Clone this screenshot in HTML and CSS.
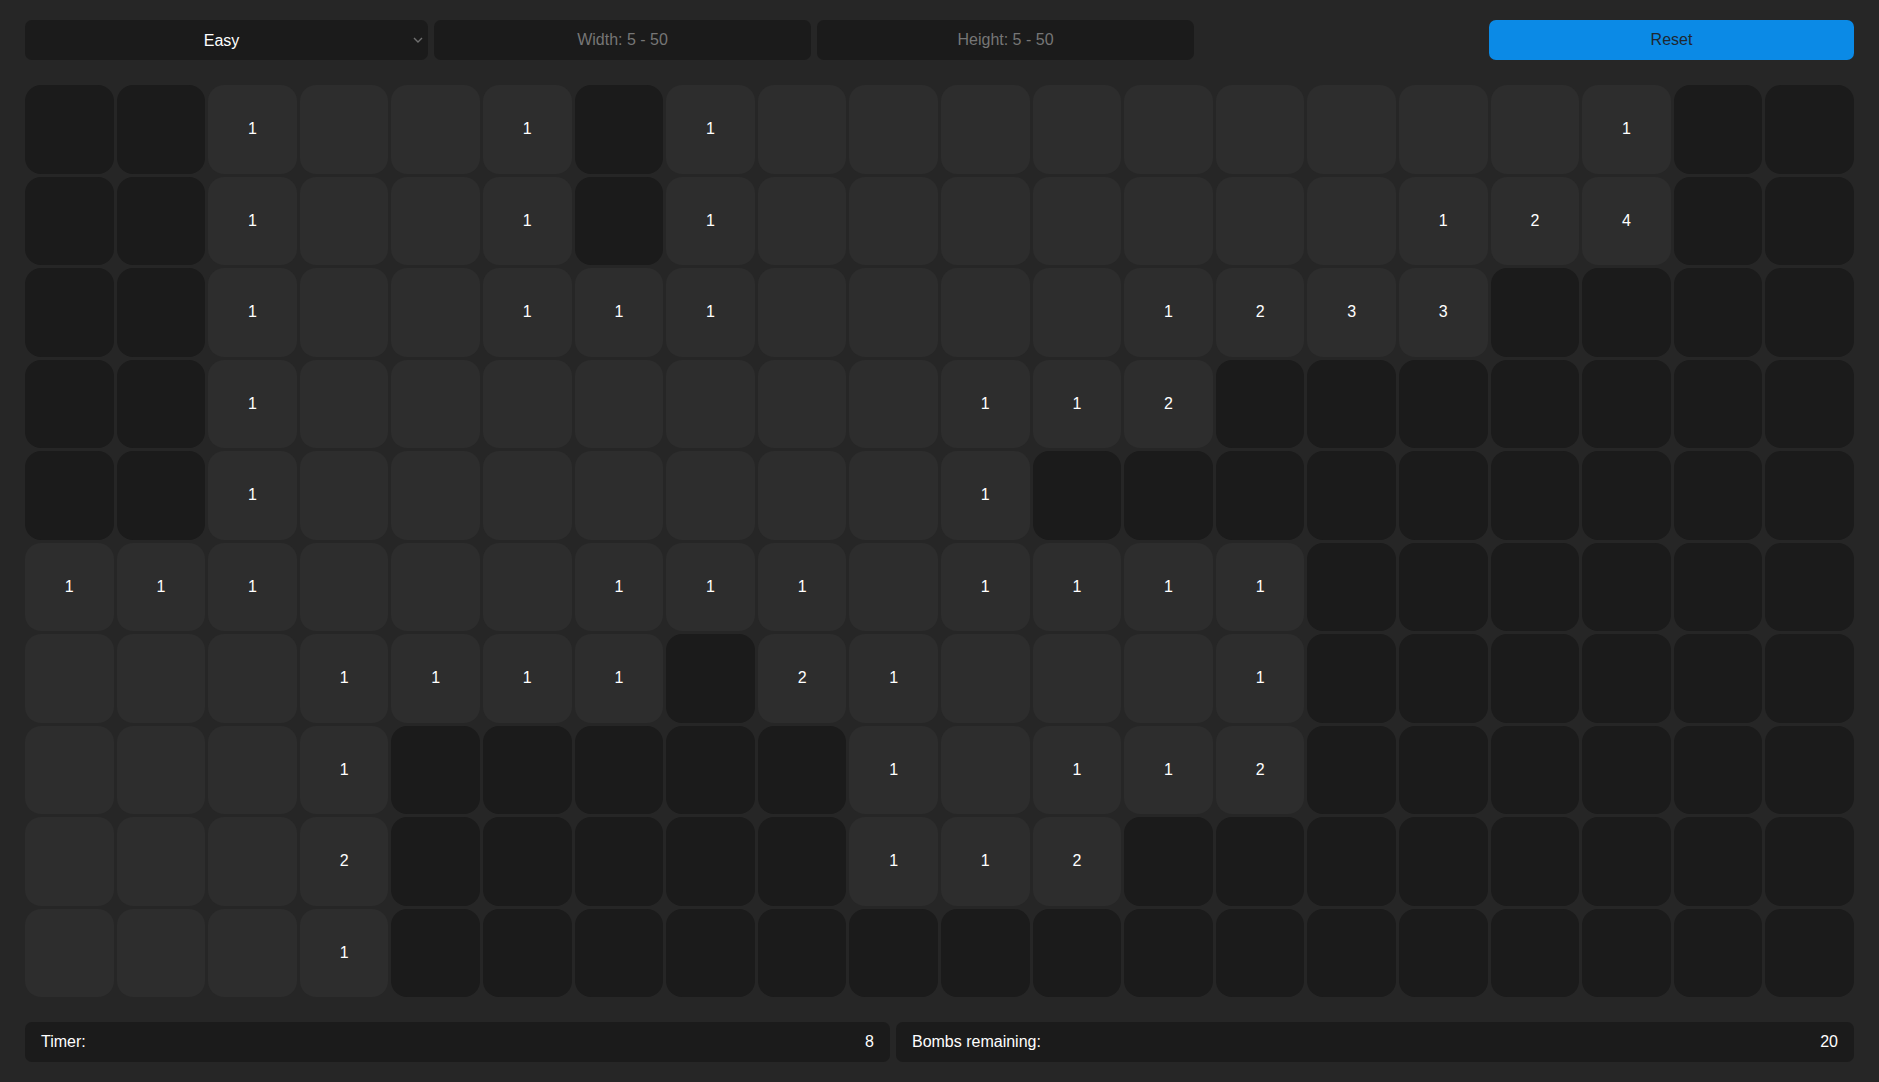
FILE: index.html
```html
<!DOCTYPE html>
<html lang="en">
<head>
<meta charset="utf-8">
<title>Minesweeper</title>
<link rel="stylesheet" href="styles.css">
</head>
<body>
<div class="app">
  <div class="toolbar">
    <div class="select-wrap">
      <select class="difficulty">
        <option>Easy</option>
        <option>Medium</option>
        <option>Hard</option>
      </select>
      <svg class="chevron" width="10" height="6" viewBox="0 0 10 6"><path d="M1 1 L5 5 L9 1" fill="none" stroke="#6f6f6f" stroke-width="1.4"/></svg>
    </div>
    <input class="field field-w" type="text" placeholder="Width: 5 - 50">
    <input class="field field-h" type="text" placeholder="Height: 5 - 50">
    <div class="spacer"></div>
    <button class="reset">Reset</button>
  </div>

  <div class="board">
    <!-- row 0 -->
    <div class="cell"></div><div class="cell"></div><div class="cell open">1</div><div class="cell open"></div><div class="cell open"></div><div class="cell open">1</div><div class="cell"></div><div class="cell open">1</div><div class="cell open"></div><div class="cell open"></div><div class="cell open"></div><div class="cell open"></div><div class="cell open"></div><div class="cell open"></div><div class="cell open"></div><div class="cell open"></div><div class="cell open"></div><div class="cell open">1</div><div class="cell"></div><div class="cell"></div>
    <!-- row 1 -->
    <div class="cell"></div><div class="cell"></div><div class="cell open">1</div><div class="cell open"></div><div class="cell open"></div><div class="cell open">1</div><div class="cell"></div><div class="cell open">1</div><div class="cell open"></div><div class="cell open"></div><div class="cell open"></div><div class="cell open"></div><div class="cell open"></div><div class="cell open"></div><div class="cell open"></div><div class="cell open">1</div><div class="cell open">2</div><div class="cell open">4</div><div class="cell"></div><div class="cell"></div>
    <!-- row 2 -->
    <div class="cell"></div><div class="cell"></div><div class="cell open">1</div><div class="cell open"></div><div class="cell open"></div><div class="cell open">1</div><div class="cell open">1</div><div class="cell open">1</div><div class="cell open"></div><div class="cell open"></div><div class="cell open"></div><div class="cell open"></div><div class="cell open">1</div><div class="cell open">2</div><div class="cell open">3</div><div class="cell open">3</div><div class="cell"></div><div class="cell"></div><div class="cell"></div><div class="cell"></div>
    <!-- row 3 -->
    <div class="cell"></div><div class="cell"></div><div class="cell open">1</div><div class="cell open"></div><div class="cell open"></div><div class="cell open"></div><div class="cell open"></div><div class="cell open"></div><div class="cell open"></div><div class="cell open"></div><div class="cell open">1</div><div class="cell open">1</div><div class="cell open">2</div><div class="cell"></div><div class="cell"></div><div class="cell"></div><div class="cell"></div><div class="cell"></div><div class="cell"></div><div class="cell"></div>
    <!-- row 4 -->
    <div class="cell"></div><div class="cell"></div><div class="cell open">1</div><div class="cell open"></div><div class="cell open"></div><div class="cell open"></div><div class="cell open"></div><div class="cell open"></div><div class="cell open"></div><div class="cell open"></div><div class="cell open">1</div><div class="cell"></div><div class="cell"></div><div class="cell"></div><div class="cell"></div><div class="cell"></div><div class="cell"></div><div class="cell"></div><div class="cell"></div><div class="cell"></div>
    <!-- row 5 -->
    <div class="cell open">1</div><div class="cell open">1</div><div class="cell open">1</div><div class="cell open"></div><div class="cell open"></div><div class="cell open"></div><div class="cell open">1</div><div class="cell open">1</div><div class="cell open">1</div><div class="cell open"></div><div class="cell open">1</div><div class="cell open">1</div><div class="cell open">1</div><div class="cell open">1</div><div class="cell"></div><div class="cell"></div><div class="cell"></div><div class="cell"></div><div class="cell"></div><div class="cell"></div>
    <!-- row 6 -->
    <div class="cell open"></div><div class="cell open"></div><div class="cell open"></div><div class="cell open">1</div><div class="cell open">1</div><div class="cell open">1</div><div class="cell open">1</div><div class="cell"></div><div class="cell open">2</div><div class="cell open">1</div><div class="cell open"></div><div class="cell open"></div><div class="cell open"></div><div class="cell open">1</div><div class="cell"></div><div class="cell"></div><div class="cell"></div><div class="cell"></div><div class="cell"></div><div class="cell"></div>
    <!-- row 7 -->
    <div class="cell open"></div><div class="cell open"></div><div class="cell open"></div><div class="cell open">1</div><div class="cell"></div><div class="cell"></div><div class="cell"></div><div class="cell"></div><div class="cell"></div><div class="cell open">1</div><div class="cell open"></div><div class="cell open">1</div><div class="cell open">1</div><div class="cell open">2</div><div class="cell"></div><div class="cell"></div><div class="cell"></div><div class="cell"></div><div class="cell"></div><div class="cell"></div>
    <!-- row 8 -->
    <div class="cell open"></div><div class="cell open"></div><div class="cell open"></div><div class="cell open">2</div><div class="cell"></div><div class="cell"></div><div class="cell"></div><div class="cell"></div><div class="cell"></div><div class="cell open">1</div><div class="cell open">1</div><div class="cell open">2</div><div class="cell"></div><div class="cell"></div><div class="cell"></div><div class="cell"></div><div class="cell"></div><div class="cell"></div><div class="cell"></div><div class="cell"></div>
    <!-- row 9 -->
    <div class="cell open"></div><div class="cell open"></div><div class="cell open"></div><div class="cell open">1</div><div class="cell"></div><div class="cell"></div><div class="cell"></div><div class="cell"></div><div class="cell"></div><div class="cell"></div><div class="cell"></div><div class="cell"></div><div class="cell"></div><div class="cell"></div><div class="cell"></div><div class="cell"></div><div class="cell"></div><div class="cell"></div><div class="cell"></div><div class="cell"></div>
  </div>

  <div class="status">
    <div class="stat"><span class="stat-label">Timer:</span><span class="stat-value">8</span></div>
    <div class="stat"><span class="stat-label">Bombs remaining:</span><span class="stat-value">20</span></div>
  </div>
</div>
</body>
</html>
```

FILE: styles.css
```css
* {
  box-sizing: border-box;
}

html, body {
  margin: 0;
  padding: 0;
  background: #262626;
}

body {
  font-family: "Liberation Sans", Arial, sans-serif;
  font-size: 16px;
  color: #ffffff;
}

.app {
  width: 1879px;
  height: 1082px;
  padding: 20px 25px 20px 25px;
  display: flex;
  flex-direction: column;
  gap: 25px;
}

.toolbar {
  display: flex;
  gap: 6px;
  height: 40px;
  flex: 0 0 40px;
}

.select-wrap {
  position: relative;
  width: 403px;
  flex: 0 0 403px;
}

.difficulty {
  appearance: none;
  -webkit-appearance: none;
  width: 100%;
  height: 40px;
  border: none;
  border-radius: 7px;
  background: #1b1b1b;
  color: #ffffff;
  font-family: "Liberation Sans", Arial, sans-serif;
  font-size: 16px;
  text-align: center;
  text-align-last: center;
  padding: 0 12px 0 2px;
  outline: none;
}

.chevron {
  position: absolute;
  right: 5px;
  top: 17px;
}

.field {
  height: 40px;
  border: none;
  border-radius: 7px;
  background: #1b1b1b;
  color: #ffffff;
  font-family: "Liberation Sans", Arial, sans-serif;
  font-size: 16px;
  text-align: center;
  outline: none;
  padding: 0 8px;
}

.field::placeholder {
  color: #767676;
}

.field-w {
  flex: 0 0 377px;
  width: 377px;
}

.field-h {
  flex: 0 0 377px;
  width: 377px;
}

.spacer {
  flex: 1 1 auto;
}

.reset {
  flex: 0 0 365px;
  width: 365px;
  height: 40px;
  border: none;
  border-radius: 7px;
  background: #0b8ae6;
  color: #1f2730;
  font-family: "Liberation Sans", Arial, sans-serif;
  font-size: 16px;
  cursor: pointer;
}

.board {
  display: grid;
  grid-template-columns: repeat(20, 1fr);
  grid-auto-rows: 88.5px;
  gap: 3px;
  flex: 0 0 912px;
}

.cell {
  background: #1b1b1b;
  border-radius: 16px;
  display: flex;
  align-items: center;
  justify-content: center;
  font-size: 16px;
  color: #ffffff;
}

.cell.open {
  background: #2d2d2d;
}

.status {
  display: flex;
  gap: 6px;
  height: 40px;
  flex: 0 0 40px;
}

.stat {
  flex: 1 1 auto;
  display: flex;
  justify-content: space-between;
  align-items: center;
  background: #1b1b1b;
  border-radius: 7px;
  padding: 0 16px;
  color: #ffffff;
}
```
